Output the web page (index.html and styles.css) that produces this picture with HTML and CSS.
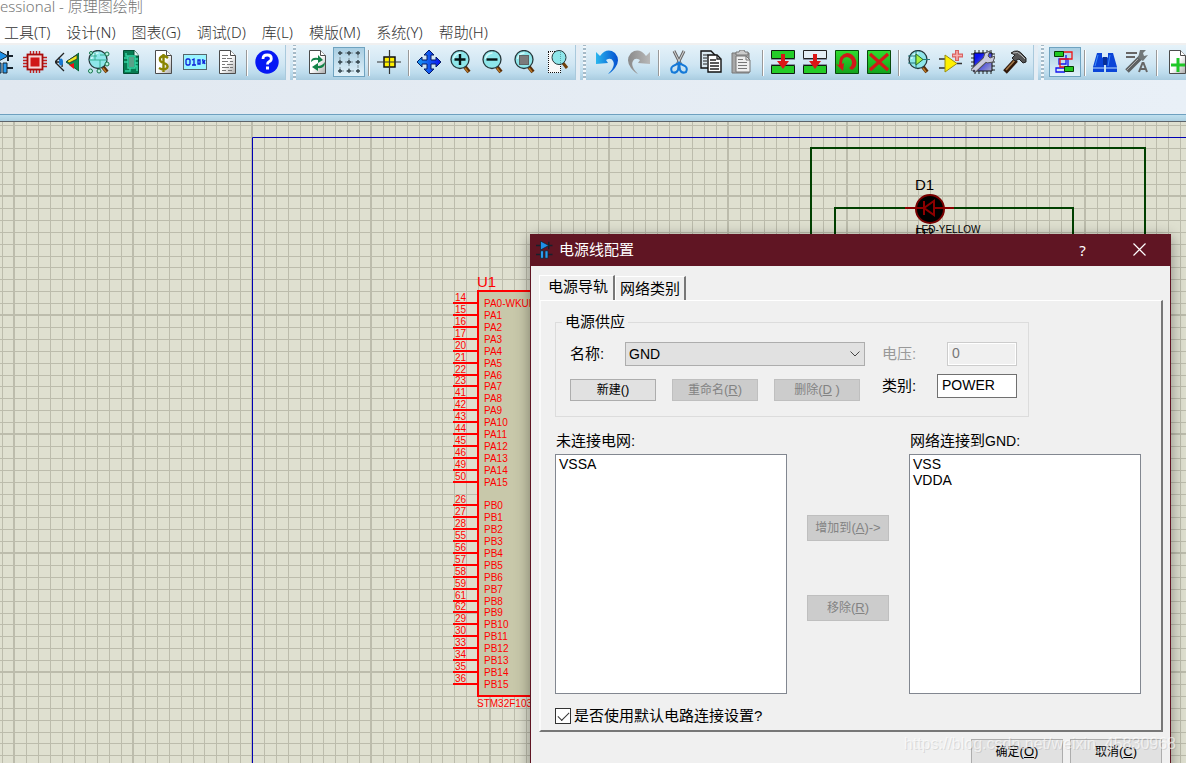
FILE: index.html
```html
<!DOCTYPE html>
<html lang="zh-CN">
<head>
<meta charset="utf-8">
<title>原理图绘制</title>
<link rel="stylesheet" href="styles.css">
</head>
<body>
<svg class="defs" aria-hidden="true">
  <defs>
    <linearGradient id="blueFade"><stop offset="0" stop-color="#29b6ee"/><stop offset="1" stop-color="#0450d0"/></linearGradient>
    <linearGradient id="grayFade"><stop offset="0" stop-color="#8a8a8a"/><stop offset="1" stop-color="#b8b8b8"/></linearGradient>
    <linearGradient id="moveFade"><stop offset="0" stop-color="#1aa0f0"/><stop offset="1" stop-color="#0a10f0"/></linearGradient>
    <linearGradient id="greenFade" x2="0" y2="1"><stop offset="0" stop-color="#2fdc2f"/><stop offset="1" stop-color="#12a31c"/></linearGradient>
    <linearGradient id="paperFade" x2="1" y2="1"><stop offset=".5" stop-color="#fff"/><stop offset="1" stop-color="#aaa"/></linearGradient>
    <linearGradient id="chipFade" x2="1" y2="1"><stop offset=".2" stop-color="#0a10f0"/><stop offset="1" stop-color="#a9a9c8"/></linearGradient>
    <symbol id="parts" viewBox="0 0 24 24">
      <path d="M0 6h22M0 18h8M14 18h8M17 1v10" stroke="#16222c" stroke-width="2"/>
      <path d="M6 0l11 6-11 6z" fill="#1e90e8" stroke="#16222c"/>
      <path d="M6 13h4v10H6zM12 13h4v10h-4z" fill="#2a9cf0" stroke="#16222c"/>
    </symbol>
    <symbol id="lens" viewBox="0 0 24 24">
      <path d="M16 17l4 5" stroke="#5a2c06" stroke-width="4"/><path d="M16 18l3 4" stroke="#b87828" stroke-width="1.500"/>
      <circle cx="11" cy="9.500" r="9" fill="#8ee6ea" stroke="#26383c" stroke-width="1.300"/>
      <path d="M4.500 9a7 7 0 0 1 7-6" stroke="#d4fafa" stroke-width="1.500" fill="none"/>
    </symbol>
    <symbol id="paper" viewBox="0 0 24 24"><path d="M4.500.500h11l5 5v18h-16z" fill="url(#paperFade)" stroke="#4c4c4c"/><path d="M15.500.500v5h5" fill="#fff" stroke="#4c4c4c"/></symbol>
    <pattern id="grid" x="252" y="74" width="119" height="119" patternUnits="userSpaceOnUse">
      <path d="M12.500 0v119M24.500 0v119M36.500 0v119M48.500 0v119M60.500 0v119M71.500 0v119M83.500 0v119M95.500 0v119M107.500 0v119M0 12.500h119M0 24.500h119M0 36.500h119M0 48.500h119M0 60.500h119M0 71.500h119M0 83.500h119M0 95.500h119M0 107.500h119M.500 0v119M118.500 0v119M0 .500h119M0 118.500h119" stroke="#bcbcac"/>
    </pattern>
  </defs>
</svg>

<header class="titlebar">essional - 原理图绘制</header>
<nav class="menu">
  <a href="#">工具(T)</a><a href="#">设计(N)</a><a href="#">图表(G)</a><a href="#">调试(D)</a><a href="#">库(L)</a><a href="#">模版(M)</a><a href="#">系统(Y)</a><a href="#">帮助(H)</a>
</nav>

<div class="toolbars">
  <div class="group group-first">
    <button class="tool" aria-label="元件"><svg viewBox="0 0 24 24"><use href="#parts"/></svg></button>
    <button class="tool" aria-label="芯片"><svg viewBox="0 0 24 24"><path d="M7.500 1v22M10.500 1v22M13.500 1v22M16.500 1v22M0 7.500h24M0 10.500h24M0 13.500h24M0 16.500h24" stroke="#c02020" stroke-width="1.400"/><rect x="4.500" y="4.500" width="15" height="15" fill="#f4d8d8" stroke="#a80c0c" stroke-width="1.800"/><rect x="7.500" y="7.500" width="9" height="9" fill="#d01818"/></svg></button>
    <button class="tool" aria-label="3D"><svg viewBox="0 0 24 24"><path d="M9 3L0 12l9 9M3 8q5 3 4 9M1 12h4" fill="none" stroke="#222" stroke-width="1.300"/><ellipse cx="6" cy="12" rx="2" ry="3.500" fill="#1878d0"/><path d="M11 12L24 3v18z" fill="#0a9052" stroke="#085a30"/><path d="M12 11l10-6v4l-8 4z" fill="#f0e820" stroke="#222" stroke-width=".7"/><path d="M14 15l5-2v6z" fill="#f01010"/></svg></button>
    <button class="tool" aria-label="查看"><svg viewBox="0 0 24 24"><use href="#lens"/><path d="M2 10h18M8 3v7M13 10v8M4 6h6M13 5h5" stroke="#35ad92" fill="none"/><g fill="#baf0e0" stroke="#15764c"><circle cx="4" cy="3" r="1.500"/><circle cx="20" cy="4" r="2"/><circle cx="20" cy="14" r="2"/><circle cx="3.500" cy="21" r="2"/><circle cx="12" cy="21" r="2"/></g></svg></button>
    <button class="tool" aria-label="网表"><svg viewBox="0 0 24 24"><path d="M4.500.500h11l4 5v18h-15z" fill="#077b51" stroke="#044b32"/><path d="M15 0v6h5" fill="#e0f4f0" stroke="#044b32"/><path d="M9 6h7v12H9zM5 8h4M5 12h4M16 9h3M16 13h3M7 3v3h3M11 18v3H6M16 16h2v5" fill="none" stroke="#35d4a4" stroke-width="1.400"/><rect x="10" y="7" width="5" height="10" fill="#5aa088"/></svg></button>
    <button class="tool" aria-label="材料清单"><svg viewBox="0 0 24 24"><use href="#paper"/><path d="M17 8Q12 4 9 8q-1 4 4 5 5 2 3 5-3 3-8 0M12.500 4v18" fill="none" stroke="#8a8400" stroke-width="2.400"/></svg></button>
    <button class="tool" aria-label="源代码"><svg viewBox="0 0 24 24"><rect x=".500" y="4.500" width="23" height="15" fill="#99f5ff" stroke="#56666c"/><path d="M4 9h2l1 1v4l-1 1H4l-1-1v-4zM9 10l2-1v6M9 15h4M15 10h2v4h-2zM19 10h1v4M22 10l-1 2 1 2" fill="none" stroke="#0b20d8" stroke-width="1.300"/></svg></button>
    <button class="tool" aria-label="文档"><svg viewBox="0 0 24 24"><use href="#paper"/><path d="M7 5.500h6M7 8.500h4m1 0h5M7 11.500h6m2 0h3M7 14.500h3m2 0h6M7 17.500h7m1 0h3M7 20.500h4m2 0h4" stroke="#777"/></svg></button>
    <span class="sep"></span>
    <button class="tool" aria-label="帮助"><svg viewBox="0 0 24 24"><circle cx="12" cy="12" r="11.700" fill="#0618f4"/><path d="M8 9q0-4 4.300-4 4 0 4 3.500 0 2.200-2.300 3.300-1.500.8-1.500 2.700" fill="none" stroke="#fff" stroke-width="2.800"/><rect x="11" y="16.500" width="3" height="3" fill="#fff"/></svg></button>
  </div>
  <div class="group">
    <span class="grip"></span>
    <button class="tool" aria-label="刷新"><svg viewBox="0 0 24 24"><use href="#paper"/><path d="M6 12q0-5 7-4V5l5 5-5 3v-3q-4-1-7 2z" fill="#128348"/><path d="M20 12q0 7-7 6v3l-6-4 6-4v3q4 0 7-4z" fill="#128348"/></svg></button>
    <button class="tool pressed" aria-label="网格"><svg viewBox="0 0 24 24"><path d="M3 3h18v18H3zM3 12h18M12 3v18" fill="none" stroke="#7b8b94" stroke-dasharray="3 2"/><path d="M1 3h4M3 1v4M10 3h4M12 1v4M19 3h4M21 1v4M1 12h4M3 10v4M10 12h4M12 10v4M19 12h4M21 10v4M1 21h4M3 19v4M10 21h4M12 19v4M19 21h4M21 19v4" stroke="#34444c" stroke-width="1.300"/></svg></button>
    <span class="sep"></span>
    <button class="tool" aria-label="原点"><svg viewBox="0 0 24 24"><rect x="7" y="7" width="11" height="10" fill="#fff000" stroke="#111" stroke-width="1.500"/><path d="M12.500 0v24M0 12h24" stroke="#333" stroke-width="1.200"/></svg></button>
    <span class="sep"></span>
    <button class="tool" aria-label="平移"><svg viewBox="0 0 24 24"><path d="M12 0l5 5-3 0v5h5V7l5 5-5 5v-3h-5v5h3l-5 5-5-5h3v-5H5v3l-5-5 5-5v3h5V5H7z" fill="url(#moveFade)" stroke="#061a66"/></svg></button>
    <button class="tool" aria-label="放大"><svg viewBox="0 0 24 24"><use href="#lens"/><path d="M5.500 9.500h11M11 4v11" stroke="#061414" stroke-width="2.400"/></svg></button>
    <button class="tool" aria-label="缩小"><svg viewBox="0 0 24 24"><use href="#lens"/><path d="M5.500 9.500h11" stroke="#061414" stroke-width="2.400"/></svg></button>
    <button class="tool" aria-label="全图"><svg viewBox="0 0 24 24"><use href="#lens"/><rect x="6.500" y="5.500" width="9" height="9" fill="#7b7b7b" stroke="#5e6464"/></svg></button>
    <button class="tool" aria-label="区域"><svg viewBox="0 0 24 24"><rect x="3" y="1" width="13" height="22" fill="#f8f8f8"/><path d="M3 1.500h13M3 22.500h13M3.500 2v21M15.500 2v21" stroke="#111" stroke-dasharray="1 1"/><path d="M18 13l4 5" stroke="#70400a" stroke-width="3"/><circle cx="14" cy="7.500" r="7" fill="#8ee6ea" stroke="#26383c"/><path d="M15.500 2v11" stroke="#5aa4a8" stroke-dasharray="1 1"/></svg></button>
  </div>
  <div class="group">
    <span class="grip"></span>
    <button class="tool" aria-label="撤销"><svg viewBox="0 0 24 24"><path d="M1 2l4 4Q12-3 20 3q6 7 0 15-4 5-7 6 8-8 5-13-2-4-7-1l2 3L1 14z" fill="url(#blueFade)"/></svg></button>
    <button class="tool" aria-label="重做"><svg viewBox="0 0 24 24"><path d="M23 2l-4 4Q12-3 4 3q-6 7 0 15 4 5 7 6-8-8-5-13 2-4 7-1l-2 3 12 1z" fill="url(#grayFade)"/></svg></button>
    <span class="sep"></span>
    <button class="tool" aria-label="剪切"><svg viewBox="0 0 24 24"><path d="M7 1l7 14M17 1l-7 14" stroke="#666" stroke-width="3"/><path d="M7 1l6 12M17 1l-6 12" stroke="#ddd"/><path d="M12 13l-6 3q-3 2-1 6 4 2 6-2zM12 13l6 3q3 2 1 6-4 2-6-2z" fill="none" stroke="#1479d8" stroke-width="2"/></svg></button>
    <button class="tool" aria-label="复制"><svg viewBox="0 0 24 24"><path d="M2 1h10l4 4v13H2z" fill="#d9e8f0" stroke="#111" stroke-width="1.400"/><path d="M4 5h5M4 8h4M4 11h4M4 14h4" stroke="#222"/><path d="M9 5h9l4 4v13H9z" fill="#fff" stroke="#111" stroke-width="1.400"/><path d="M18 5v4h4M11 10h6M11 13h9M11 16h9M11 19h9" fill="none" stroke="#222" stroke-width="1.300"/></svg></button>
    <button class="tool" aria-label="粘贴"><svg viewBox="0 0 24 24"><path d="M1 3h17v20H1z" fill="#a8a8a8" stroke="#777"/><path d="M5 2h3l1-2h4l1 2h3v3H5z" fill="#ccc" stroke="#777"/><path d="M5 6h10l4 4v12H5z" fill="#eee" stroke="#777"/><path d="M15 6v4h4M7 9.500h5M7 12.500h9M7 15.500h9M7 18.500h9" fill="none" stroke="#777"/></svg></button>
    <span class="sep"></span>
    <button class="tool" aria-label="块复制"><svg viewBox="0 0 24 24"><path d="M.500.500h23v8H.500zM.500 15.500h23v8H.500z" fill="#24cc28" stroke="#101c10"/><path d="M0 9.500h24M0 14.500h24" stroke="#8a94a8"/><path d="M10 4h4v7h4l-6 8-6-8h4z" fill="#dc1616"/></svg></button>
    <button class="tool" aria-label="块移动"><svg viewBox="0 0 24 24"><path d="M.500.500h23v8H.500z" fill="#e4eff6" stroke="#222"/><path d="M.500 15.500h23v8H.500z" fill="#24cc28" stroke="#101c10"/><path d="M0 9.500h24M0 14.500h24" stroke="#8a94a8"/><path d="M10 4h4v7h4l-6 8-6-8h4z" fill="#dc1616"/></svg></button>
    <button class="tool" aria-label="块旋转"><svg viewBox="0 0 24 24"><path d="M.500.500h23v23H.500z" fill="url(#greenFade)" stroke="#064a0a"/><path d="M17 20q6-4 4-10-3-7-9-7-8 1-8 12l-3-1 7 7 1-8-2 1q0-7 5-7 5 1 5 6 0 3-3 5z" fill="#d01818"/></svg></button>
    <button class="tool" aria-label="块删除"><svg viewBox="0 0 24 24"><path d="M.500.500h23v23H.500z" fill="url(#greenFade)" stroke="#064a0a"/><path d="M3 4l18 16M21 4L3 20" stroke="#d41818" stroke-width="3.200"/></svg></button>
    <span class="sep"></span>
    <button class="tool" aria-label="拾取元件"><svg viewBox="0 0 24 24"><use href="#lens"/><path d="M1 6h8M1 13h8M15 9.500h8M9 0v19" stroke="#26767a"/><path d="M9 4l7 5.500L9 15z" fill="#a8f040" stroke="#287028"/></svg></button>
    <button class="tool" aria-label="制作元件"><svg viewBox="0 0 24 24"><path d="M0 9h6M0 18h6M18 13.500h5" stroke="#333" stroke-width="1.500"/><path d="M6 5l12 8.500L6 22z" fill="#fff000" stroke="#9a8e10"/><path d="M18 0v11M13 5.500h11" stroke="#d86060" stroke-width="4"/><path d="M18 1v9M14 5.500h9" stroke="#f8b0b0" stroke-width="1.500"/></svg></button>
    <button class="tool" aria-label="封装工具"><svg viewBox="0 0 24 24"><path d="M4 0v24M8 0v24M12 0v24M16 0v24M20 0v24M0 4h24M0 8h24M0 12h24M0 16h24M0 20h24" stroke="#222"/><path d="M3 3h18v18H3z" fill="url(#chipFade)" stroke="#111"/><path d="M2 21L16 8" stroke="#555" stroke-width="6"/><path d="M14 3l5-2-2 5 2 2 5-2-2 6-6 1-4-4z" fill="#ccd" stroke="#555"/><path d="M2 21L17 7" stroke="#ccd" stroke-width="4"/><circle cx="3" cy="21" r="1.300" fill="#445"/></svg></button>
    <button class="tool" aria-label="分解"><svg viewBox="0 0 24 24"><path d="M2 22L13 10" stroke="#30180a" stroke-width="5"/><path d="M3 20L12 10" stroke="#a47848" stroke-width="1.600"/><path d="M8 3q7-5 12 2l3 3v4l-3 1-4-4-4 2-3-3 3-3z" fill="#555" stroke="#222"/><path d="M10 3q5-2 8 2l4 4" fill="none" stroke="#bbb"/></svg></button>
  </div>
  <div class="group group-last">
    <span class="grip"></span>
    <button class="tool pressed" aria-label="自动布线"><svg viewBox="0 0 24 24"><path d="M13 5v9h-7v-5h9v9H3v4h9" fill="none" stroke="#1414f0" stroke-width="1.300"/><path d="M10 2h9v7H7v8h6" fill="none" stroke="#f01414" stroke-width="1.300"/><path d="M1.500 1.500h9v5h-9zM11.500 16.500h9v5h-9z" fill="#20c820" stroke="#063c06"/></svg></button>
    <span class="sep"></span>
    <button class="tool" aria-label="搜索"><svg viewBox="0 0 24 24"><path d="M4 3h5v4l2 2v13H0v-5zM15 3h5l4 14v5H13V9l2-2z" fill="#0b45d8"/><path d="M10 7h4v8h-4z" fill="#083098"/><path d="M0 18h11M13 18h11" stroke="#bde0ff"/><path d="M5 5L2 16M17 5l-2 11" stroke="#3c8cf8"/></svg></button>
    <button class="tool" aria-label="属性分配"><svg viewBox="0 0 24 24"><path d="M1 3h11M1 7h9" stroke="#666" stroke-width="2"/><path d="M2 21L17 6" stroke="#5e6264" stroke-width="5"/><path d="M15 0l-2 8 5 3 5-6-4 1-1-3 3-3z" fill="#72787a"/><path d="M2 20L13 9" stroke="#aaa"/><path d="M14 22l3.500-9h1l3.500 9M15 19h6" fill="none" stroke="#666" stroke-width="2"/></svg></button>
    <span class="sep"></span>
    <button class="tool" aria-label="新建图纸"><svg viewBox="0 0 24 24"><use href="#paper"/><path d="M13 8v14M6 15h14" stroke="#20c828" stroke-width="3"/></svg></button>
  </div>
</div>
<div class="strip"></div>
<div class="edge"></div>

<main class="canvas">
  <svg class="sheet" width="100%" height="100%">
    <rect width="100%" height="100%" fill="url(#grid)"/>
    <path d="M1400 15.500H252.500V900" fill="none" stroke="#0000b4"/>
    <g fill="none" stroke="#004000" stroke-width="2"><path d="M811 130V26h334v104"/><path d="M835 130V86h72M953 86h120v44"/></g>
    <circle cx="930" cy="87" r="14" fill="#000" stroke="#780000" stroke-width="2"/>
    <path d="M905 86h19M934 86h20M924 79v14M934 79v14l-10-7z" fill="none" stroke="#8c0000" stroke-width="2"/>
    <text class="ref" x="915" y="68">D1</text>
    <text class="ref" x="915" y="116">D2</text>
    <text class="pin" x="916" y="111">LED-YELLOW</text>
    <g class="chip">
      <rect x="478" y="169" width="180" height="405" fill="#c8c8aa" stroke="#f00" stroke-width="2"/>
      <path d="M453 181h25M453 193h25M453 205h25M453 217h25M453 229h25M453 241h25M453 253h25M453 264h25M453 276h25M453 288h25M453 300h25M453 312h25M453 324h25M453 336h25M453 348h25M453 360h25M453 383h25M453 395h25M453 407h25M453 419h25M453 431h25M453 443h25M453 455h25M453 467h25M453 479h25M453 490h25M453 502h25M453 514h25M453 526h25M453 538h25M453 550h25M453 562h25" stroke="#f00" stroke-width="2"/>
      <text class="ref" x="477" y="165">U1</text>
      <text class="pin" x="477" y="585">STM32F103R6</text>
      <g class="pin">
        <text x="455" y="179">14</text><text x="484" y="185">PA0-WKUP</text>
        <text x="455" y="191">15</text><text x="484" y="197">PA1</text>
        <text x="455" y="203">16</text><text x="484" y="209">PA2</text>
        <text x="455" y="215">17</text><text x="484" y="221">PA3</text>
        <text x="455" y="227">20</text><text x="484" y="233">PA4</text>
        <text x="455" y="239">21</text><text x="484" y="245">PA5</text>
        <text x="455" y="251">22</text><text x="484" y="257">PA6</text>
        <text x="455" y="262">23</text><text x="484" y="268">PA7</text>
        <text x="455" y="274">41</text><text x="484" y="280">PA8</text>
        <text x="455" y="286">42</text><text x="484" y="292">PA9</text>
        <text x="455" y="298">43</text><text x="484" y="304">PA10</text>
        <text x="455" y="310">44</text><text x="484" y="316">PA11</text>
        <text x="455" y="322">45</text><text x="484" y="328">PA12</text>
        <text x="455" y="334">46</text><text x="484" y="340">PA13</text>
        <text x="455" y="346">49</text><text x="484" y="352">PA14</text>
        <text x="455" y="358">50</text><text x="484" y="364">PA15</text>
        <text x="455" y="381">26</text><text x="484" y="387">PB0</text>
        <text x="455" y="393">27</text><text x="484" y="399">PB1</text>
        <text x="455" y="405">28</text><text x="484" y="411">PB2</text>
        <text x="455" y="417">55</text><text x="484" y="423">PB3</text>
        <text x="455" y="429">56</text><text x="484" y="435">PB4</text>
        <text x="455" y="441">57</text><text x="484" y="447">PB5</text>
        <text x="455" y="453">58</text><text x="484" y="459">PB6</text>
        <text x="455" y="465">59</text><text x="484" y="471">PB7</text>
        <text x="455" y="477">61</text><text x="484" y="483">PB8</text>
        <text x="455" y="488">62</text><text x="484" y="494">PB9</text>
        <text x="455" y="500">29</text><text x="484" y="506">PB10</text>
        <text x="455" y="512">30</text><text x="484" y="518">PB11</text>
        <text x="455" y="524">33</text><text x="484" y="530">PB12</text>
        <text x="455" y="536">34</text><text x="484" y="542">PB13</text>
        <text x="455" y="548">35</text><text x="484" y="554">PB14</text>
        <text x="455" y="560">36</text><text x="484" y="566">PB15</text>
      </g>
    </g>
  </svg>

  <section class="dialog" role="dialog" aria-labelledby="dlg-title">
    <div class="dialog-title">
      <svg class="dialog-icon" viewBox="0 0 24 24"><use href="#parts"/></svg>
      <h1 id="dlg-title">电源线配置</h1>
      <button class="caption-btn" aria-label="帮助">?</button>
      <button class="caption-btn" aria-label="关闭"><svg width="13" height="13" viewBox="0 0 13 13"><path d="M.500.500l12 12M12.500.500l-12 12" stroke="#fff" stroke-width="1.200"/></svg></button>
    </div>
    <div class="dialog-body">
      <div class="tabs" role="tablist">
        <button class="tab tab-active" role="tab">电源导轨</button><button class="tab" role="tab">网络类别</button>
      </div>
      <div class="panel">
        <fieldset class="supply">
          <legend>电源供应</legend>
          <div class="supply-main">
            <div class="row"><label class="name-label" for="name">名称:</label>
              <span class="combo"><select id="name"><option>GND</option></select><svg width="10" height="6" viewBox="0 0 10 6"><path d="M.500.500L5 5 9.500.500" fill="none" stroke="#444"/></svg></span></div>
            <div class="row supply-actions">
              <button class="btn">新建<span>()</span></button>
              <button class="btn" disabled>重命名<span>(<u>R</u>)</span></button>
              <button class="btn" disabled>删除<span>(<u>D</u> )</span></button>
            </div>
          </div>
          <div class="supply-side">
            <div class="row row-split"><label class="dim" for="volt">电压:</label><input class="field field-small" id="volt" value="0" disabled></div>
            <div class="row row-split"><label for="cls">类别:</label><input class="field" id="cls" value="POWER"></div>
          </div>
        </fieldset>
        <div class="nets">
          <div class="net"><label for="free">未连接电网:</label><select id="free" class="list" size="4"><option>VSSA</option></select></div>
          <div class="transfer"><button class="btn btn-tall" disabled>增加到<span>(<u>A</u>)-&gt;</span></button><button class="btn btn-tall" disabled>移除<span>(<u>R</u>)</span></button></div>
          <div class="net"><label for="joined">网络连接到<span>GND:</span></label><select id="joined" class="list" size="4"><option>VSS</option><option>VDDA</option></select></div>
        </div>
        <label class="check"><input type="checkbox" checked>是否使用默认电路连接设置?</label>
      </div>
      <div class="dialog-actions"><button class="btn btn-tall">确定<span>(<u>O</u>)</span></button><button class="btn btn-tall">取消<span>(<u>C</u>)</span></button></div>
    </div>
  </section>
  <div class="watermark">https://blog.csdn.net/weixin_45830968</div>
</main>
</body>
</html>
```
FILE: styles.css
```css
* { box-sizing: border-box; }
body {
  margin: 0;
  height: 100vh;
  overflow: hidden;
  display: flex;
  flex-direction: column;
  background: #fff;
  font-family: "Liberation Sans", "Noto Sans CJK SC", sans-serif;
  font-size: 15px;
  color: #000;
}
button, input, select { font-family: inherit; color: inherit; margin: 0; }
.defs { position: absolute; width: 0; height: 0; }

.titlebar, .menu { font-family: "Noto Sans", "Noto Sans CJK SC", sans-serif; font-weight: 300; white-space: nowrap; }
.titlebar { height: 20px; line-height: 12px; color: #777; }
.menu { display: flex; gap: 16px; height: 23px; padding-left: 4px; line-height: 24px; }
.menu a { color: #333; text-decoration: none; }

.toolbars {
  display: flex;
  flex: none;
  gap: 4px;
  height: 37px;
  overflow: hidden;
  border-top: 2px solid #f0f0f0;
  background: #e5edf4;
}
.group {
  display: flex;
  flex: none;
  align-items: center;
  padding-right: 3px;
  background: linear-gradient(#e5f2f9, #d0e6f3 55%, #bddced 80%, #a9cce0);
  border-right: 1px solid #a9c9dc;
}
.group-first { margin-left: -13px; }
.group:not(.group-last) { padding-right: 2px; }
.group-last { flex: 1 0 auto; }
.tool {
  width: 32px;
  height: 30px;
  margin-bottom: 2px;
  padding: 0;
  border: 1px solid transparent;
  background: none;
  display: grid;
  place-items: center;
}
.tool svg { width: 24px; height: 24px; display: block; }
.pressed { background: linear-gradient(#a9cee2, #e0f1fa); border-color: #6fa3c0; }
.sep { width: 8px; height: 26px; background: linear-gradient(90deg, transparent 3px, #999 3px 4px, #fff 4px 5px, transparent 5px); }
.grip { width: 11px; height: 100%; background: linear-gradient(#f4f8fb 50%, #a4bac8 50%) 3px 1px / 3px 4px repeat-y; }
.strip { flex: none; height: 34px; background: linear-gradient(90deg, #e1e8f0, #e9f0f7); }
.edge { flex: none; height: 8px; border-top: 1px solid #6ea0bf; border-bottom: 1px solid #5c646a; background: linear-gradient(#bfe0ef, #abcfe0); }

.canvas { position: relative; flex: 1; min-height: 0; overflow: hidden; background: #dfe0d0; }
.sheet { display: block; }
.ref { font-size: 15px; }
.pin { font-size: 10px; }
.chip text { fill: #f00; }

.dialog {
  position: absolute;
  left: 530px;
  top: 112px;
  width: 641px;
  border: 1px solid #601523;
  border-top: 0;
  background: #f0f0f0;
  box-shadow: 0 3px 14px rgba(0, 0, 0, .4);
}
.dialog-title { display: flex; align-items: center; height: 32px; padding: 0 2px 0 5px; background: #601523; color: #fff; }
.dialog-icon { width: 18px; height: 20px; }
.dialog-title h1 { flex: 1; margin: 0 0 0 5px; font-size: 15px; font-weight: 400; line-height: 20px; }
.caption-btn { width: 57px; height: 32px; padding: 0; border: 0; background: none; font: 15px "Noto Sans", sans-serif; }
.dialog-body { padding: 9px 7px 20px 8px; }
.tabs { display: flex; align-items: flex-end; height: 25px; }
.tab {
  height: 24px;
  padding: 0 4px;
  border: solid;
  border-width: 1px 2px 0 1px;
  border-color: #fff #777 #fff #fff;
  background: #f0f0f0;
  font-size: 15px;
  line-height: 20px;
}
.tab-active { height: 25px; padding: 0 5px 2px 8px; }
.panel {
  border: 2px solid;
  border-top-width: 1px;
  border-color: #fff #777 #777 #fafafa;
  padding: 11px 14px 4px;
}
.supply {
  display: flex;
  justify-content: space-between;
  width: 474px;
  margin: 0;
  padding: 10px 11px 15px 14px;
  border: 1px solid #dcdcdc;
}
.supply legend { margin-left: -8px; padding: 0 3px; line-height: 20px; }
.supply-main { display: flex; flex-direction: column; gap: 13px; }
.supply-side { display: flex; flex-direction: column; gap: 8px; width: 135px; }
.row { display: flex; align-items: center; }
.row label { line-height: 20px; }
.row-split { justify-content: space-between; height: 24px; }
.supply-actions { gap: 16px; }
.name-label { width: 55px; }
.dim { color: #999; }
.combo { display: grid; align-items: center; width: 240px; }
.combo select, .combo svg { grid-area: 1 / 1; }
.combo svg { justify-self: end; margin-right: 5px; pointer-events: none; }
.combo select { appearance: none; width: 100%; height: 24px; padding: 0 3px; border: 1px solid #adadad; border-radius: 0; background: #e1e1e1; font-size: 14px; }
.field { width: 80px; height: 24px; padding: 0 4px 2px; border: 1px solid #707070; background: #fff; font-size: 14px; }
.field-small { width: 70px; }
.field:disabled { border-color: #ccc; background: #f0f0f0; color: #777; box-shadow: inset 0 0 0 1px #fff; }
.btn {
  width: 86px;
  height: 22px;
  padding: 0;
  border: 1px solid #adadad;
  background: #e1e1e1;
  font-size: 12px;
  line-height: 20px;
  white-space: nowrap;
}
.btn span { font-size: 13px; }
.btn:disabled { border-color: #bfbfbf; background: #ccc; color: #838383; }
.btn-tall { width: 82px; height: 26px; }
.nets { display: flex; gap: 20px; margin-top: 14px; }
.net { width: 232px; }
.net label { display: block; height: 23px; padding-left: 1px; line-height: 20px; white-space: nowrap; }
.net label span { font-size: 14px; }
.list { display: block; width: 100%; height: 240px; padding: 1px; overflow: hidden; border: 1px solid #828790; border-radius: 0; background: #fff; font-size: 14px; }
.list option { height: 16px; min-height: 16px; padding: 0 2px; line-height: 16px; }
.transfer { display: flex; flex-direction: column; gap: 54px; padding-top: 84px; }
.check { display: flex; align-items: center; gap: 3px; margin-top: 12px; line-height: 20px; }
.check input { appearance: none; display: grid; place-items: center; width: 16px; height: 16px; border: 1px solid #333; background: #fff; }
.check input::before { content: ""; width: 10px; height: 5px; margin-bottom: 3px; border: solid #333; border-width: 0 0 1px 1px; rotate: -45deg; }
.dialog-actions { display: flex; justify-content: flex-end; gap: 7px; padding: 7px 1px 0 0; }
.dialog-actions .btn { width: 92px; }
.watermark { position: absolute; right: 10px; bottom: 9px; font-size: 16px; line-height: 20px; color: rgba(255, 255, 255, .6); text-shadow: 1px 1px 0 rgba(120, 120, 120, .2); pointer-events: none; }
```
